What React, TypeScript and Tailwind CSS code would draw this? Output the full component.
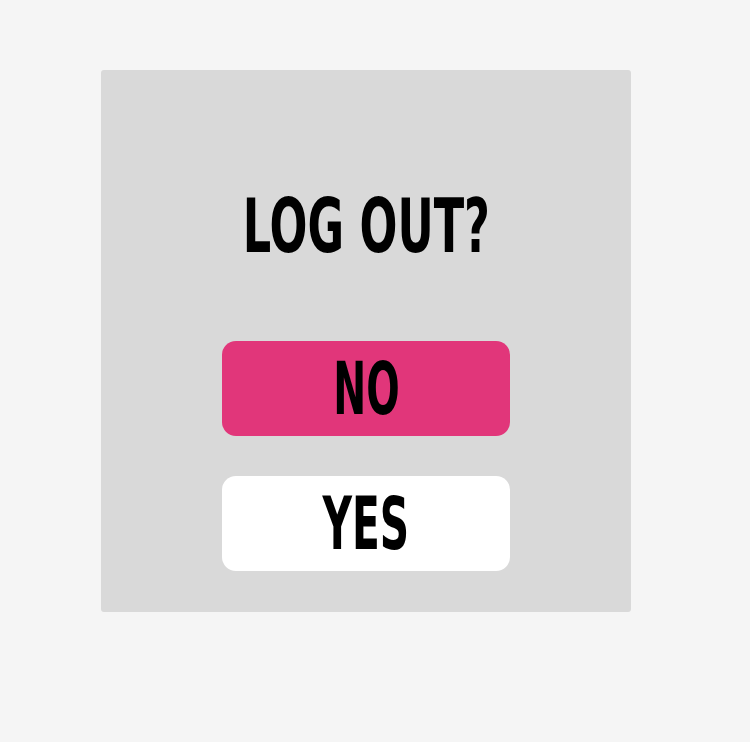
const App = () => (
  <div className="min-h-[742px] w-full bg-[#f5f5f5] pt-[70px] pl-[101px]">
    <div className="flex h-[542px] w-[530px] flex-col items-center rounded-[3px] bg-[#d9d9d9] pt-[119px]">
      <h1 className="inline-block origin-center scale-x-[0.67] font-['DejaVu_Sans_Condensed',sans-serif] text-[74px] font-bold leading-none text-black">
        LOG OUT?
      </h1>

      <button
        type="button"
        className="mt-[78px] flex h-[95px] w-[288px] items-center justify-center rounded-[14px] bg-[#e1367a]"
      >
        <span className="inline-block scale-x-[0.6] font-['DejaVu_Sans_Condensed',sans-serif] text-[73px] font-bold leading-none text-black">
          NO
        </span>
      </button>

      <button
        type="button"
        className="mt-[40px] flex h-[95px] w-[288px] items-center justify-center rounded-[14px] bg-white"
      >
        <span className="inline-block scale-x-[0.62] font-['DejaVu_Sans_Condensed',sans-serif] text-[73px] font-bold leading-none text-black">
          YES
        </span>
      </button>
    </div>
  </div>
);

export default App;
